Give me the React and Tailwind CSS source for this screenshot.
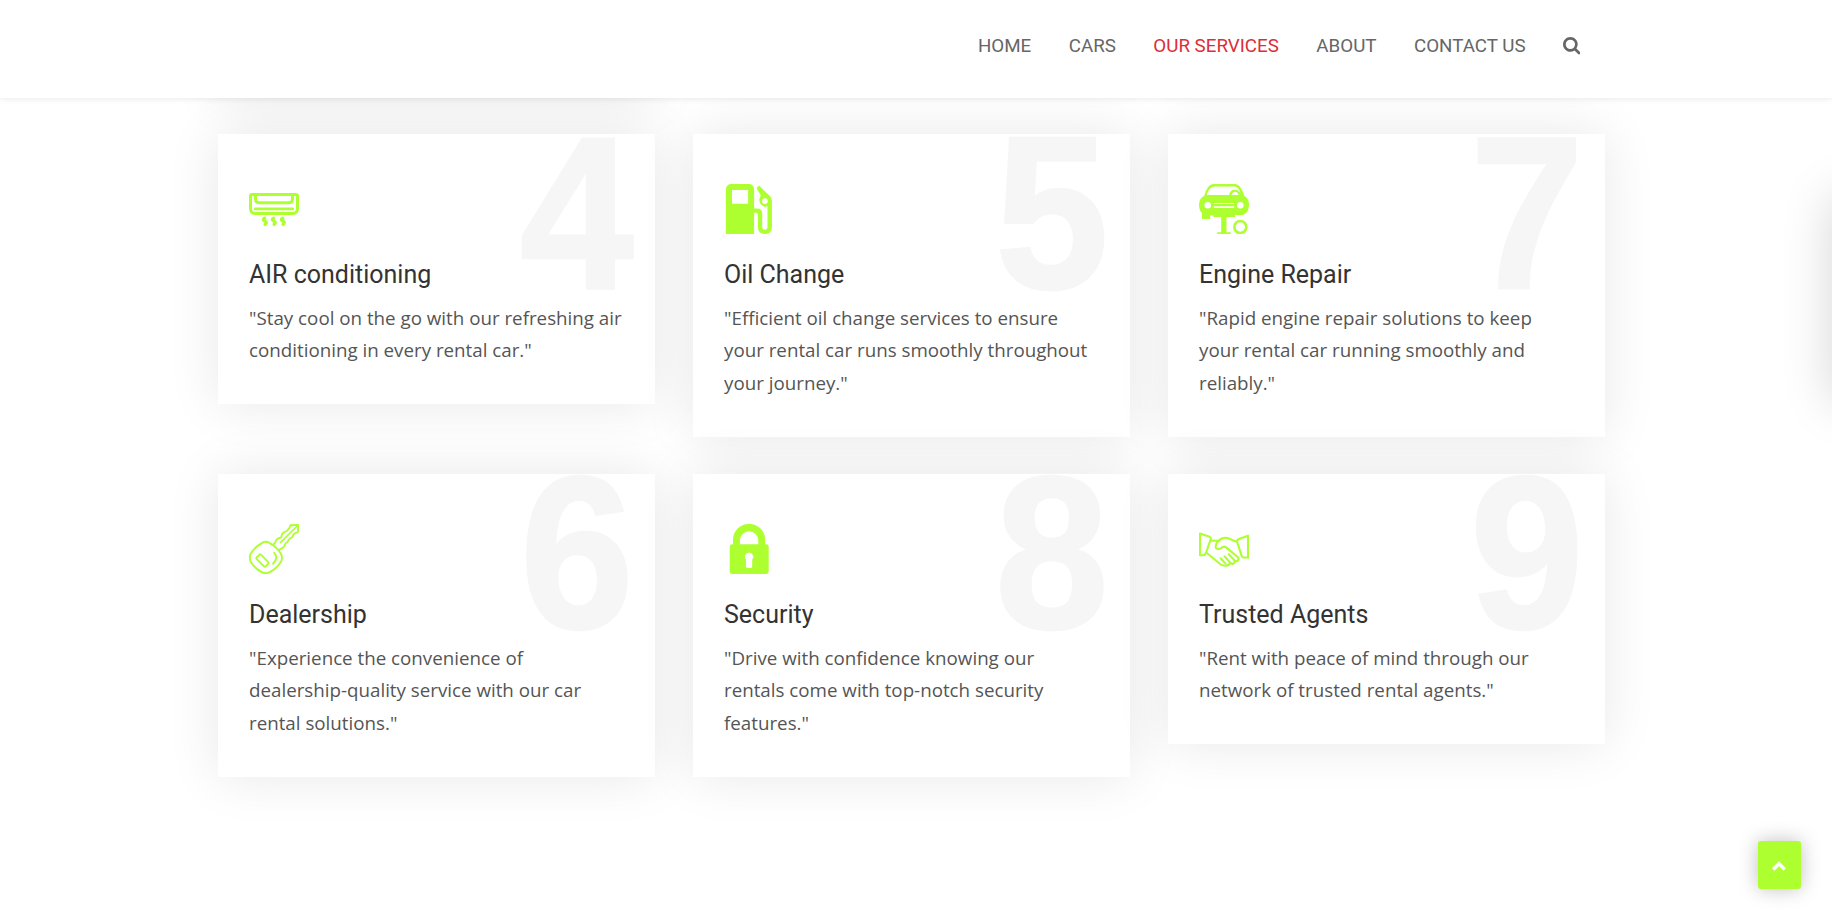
const AirIcon = () => (
  <svg viewBox="0 0 50 50" className="size-[50px]" fill="none" stroke="#adff2f" strokeWidth="3" strokeLinecap="round" strokeLinejoin="round">
    <path d="M3.2 10.5H46.8Q48.5 10.5 48.5 12V24.5Q48.5 29.5 43.8 29.5H6.2Q1.5 29.5 1.5 24.5V12Q1.5 10.5 3.2 10.5Z" />
    <path d="M6.500 11V15Q6.500 18.700 10 18.700H40Q43.500 18.700 43.500 15V11" />
    <path d="M6.2 24.900H43.8" strokeWidth="2.600" />
    <path d="M15.6 34.200Q13.2 35.6 15.6 37Q18.6 38.6 16.2 40.400M24.6 34.200Q22.2 35.6 24.6 37Q27.6 38.6 25.2 40.400M33.6 34.200Q31.2 35.6 33.6 37Q36.6 38.6 34.2 40.400" strokeWidth="3.400" />
  </svg>
);

const GasIcon = () => (
  <svg viewBox="-0.7 0 50 50" className="size-[50px]" fill="#adff2f">
    <path fillRule="evenodd" d="M7 0H23.6Q29.4 0 29.4 5.8V24.6H32.4Q37.5 24.6 37.5 29.7V43Q37.5 45.8 40.1 45.8T42.8 43V21.9Q41.5 22.7 40 22.7A6.9 6.9 0 0 1 36.2 11.6L31.8 4.3L34.4 1.6L45.2 12Q47.2 14 47.2 17V43Q47.2 50 40.3 50T33.2 43V30.4Q33.2 28.8 31.6 28.8H29.4V50H1.2V5.8Q1.2 0 7 0ZM7.3 6.1V19.8H23.4V6.1ZM40.2 14.2A2.9 2.9 0 1 0 40.2 20A2.9 2.9 0 1 0 40.2 14.2Z" />
  </svg>
);

const CarIcon = () => (
  <svg viewBox="0 0 50 50" className="size-[50px]" fill="#adff2f">
    <path fillRule="evenodd" d="M15 0H35.5Q39 0 41.3 3.2Q43.8 6.5 45.3 11.7Q50.2 15 50 21Q49.8 29 43.5 31H36V33H14.4V31.5H11.2V35H3V29.2Q0 26 0 21Q-.2 14.5 5.2 11.7Q6.3 7 9 3.2Q11.4 0 15 0ZM15.5 2.6Q12.4 2.6 10.5 5.3Q8.6 8 7.6 11.1H30.2C30.5 7.8 32.8 5.8 36 5.8C39 5.8 40.9 7.5 41.9 10.3Q41.2 7.4 39.3 4.8Q37.8 2.6 35.4 2.6ZM36 7.8Q33.2 8 32.6 11.1H39.7Q38.8 8 36 7.8ZM8.7 17.9A3.3 3.3 0 1 0 8.7 24.5A3.3 3.3 0 1 0 8.7 17.9ZM41.3 17.9A3.3 3.3 0 1 0 41.3 24.5A3.3 3.3 0 1 0 41.3 17.9ZM14.8 18.9V20.1H35.2V18.9ZM14.8 22.2V24H35.2V22.2Z" />
    <path d="M22.2 32.5H27.5V48.2H31.8V50H18.2V48.2H22.2Z" />
    <circle cx="41.3" cy="43" r="6" fill="none" stroke="#adff2f" strokeWidth="2.6" />
  </svg>
);

const KeyIcon = () => (
  <svg viewBox="0 0 50 50" className="size-[50px]" fill="none" stroke="#adff2f" strokeWidth="1.9" strokeLinecap="round" strokeLinejoin="round">
    <path d="M13.2 18.8Q16.8 16.8 20.3 18.8Q28.5 23.2 32.2 30.3Q33.8 33.8 32.2 37.2Q28.2 44.5 20.3 48.3Q16.8 50 13.2 48.3Q5.3 44.5 1.5 37.2Q.3 33.800 1.5 30.3Q5.3 23.2 13.2 18.8Z" />
    <path d="M10.6 30.6L7.7 33.5Q6.9 34.3 7.7 35.1L15 42.4Q15.8 43.2 16.6 42.4L19.3 39.7Q20.1 38.9 19.3 38.1L12 30.6Q11.3 29.9 10.6 30.6Z" />
    <path d="M25.2 28.8Q30 34 24 39.7M24 20.8L26.400 18.400C27 14.800 28.600 14.8 32.200 13.400C32.800 9 34.200 8.200 38.200 6.800C39.400 4.600 38.800 5.600 40.400 4L41.400 1.300L49.1.9L49 8L45.400 9.600C43.400 10.200 44.600 12.400 43 13.400C39.600 14.300 39.400 16.600 38.200 18.400C35.200 19.400 36 22.5 34 23.600L30 26" />
    <path d="M47.600 2.500L31.400 18.600" strokeWidth="1.6" />
  </svg>
);

const LockIcon = () => (
  <svg viewBox="-0.5 0 50 50" className="size-[50px]" fill="#adff2f">
    <path fillRule="evenodd" d="M8.5 20.3V16A16.1 16.1 0 0 1 40.7 16V20.3H41.8Q44.2 20.3 44.2 22.7V47.6Q44.2 50 41.8 50H7.6Q5.2 50 5.2 47.6V22.7Q5.2 20.3 7.6 20.3ZM15.4 20.3H33.8V16.5A9.2 9.2 0 0 0 15.4 16.5ZM24.6 28.5A4.2 4.2 0 0 0 21.5 35.5V42.5Q21.5 43.9 22.9 43.9H26.3Q27.7 43.9 27.7 42.5V35.5A4.2 4.2 0 0 0 24.6 28.5Z" />
  </svg>
);

const HandshakeIcon = () => (
  <svg viewBox="0 0 50 50" className="size-[50px]" fill="none" stroke="#adff2f" strokeWidth="2.1" strokeLinecap="round" strokeLinejoin="round">
    <path d="M1 9.6L9.8 12.4Q12.4 13.3 11.7 15.4L6.9 29Q6 31.2 3.6 31.2H1Z" />
    <path d="M49 11.7V33.5H45.5Q43 33.5 42.4 31.2L38.1 18Q37.6 16 39.9 15Z" />
    <path d="M11.8 16.7H20.5M38 17.5C34 18 32 13.8 26.5 13.7C21 13.7 16.8 18.8 16.6 22.4C16.5 25.6 20.2 25.6 22.5 23.8Q25 21.4 27.4 23.6L38.4 32.8C41.2 35.2 38.2 38.6 35.5 36.4C36.5 39.4 33.5 41 31.2 39C30 42 25 42.4 22 40.7L7.6 28.8" />
    <path d="M29.8 30.2L35.5 36.4M25.6 32.3L31.3 38.8M21.7 34.3L26.5 39.6" />
  </svg>
);

const services = [
  { n: "4", title: "AIR conditioning", Icon: AirIcon, lines: ['"Stay cool on the go with our refreshing air', 'conditioning in every rental car."'] },
  { n: "5", title: "Oil Change", Icon: GasIcon, lines: ['"Efficient oil change services to ensure', "your rental car runs smoothly throughout", 'your journey."'] },
  { n: "7", title: "Engine Repair", Icon: CarIcon, lines: ['"Rapid engine repair solutions to keep', "your rental car running smoothly and", 'reliably."'] },
  { n: "6", title: "Dealership", Icon: KeyIcon, lines: ['"Experience the convenience of', "dealership-quality service with our car", 'rental solutions."'] },
  { n: "8", title: "Security", Icon: LockIcon, lines: ['"Drive with confidence knowing our', "rentals come with top-notch security", 'features."'] },
  { n: "9", title: "Trusted Agents", Icon: HandshakeIcon, lines: ['"Rent with peace of mind through our', 'network of trusted rental agents."'] },
];

function ServiceCard({ n, title, Icon, lines }) {
  return (
    <article className="relative bg-white px-[31px] pt-[50px] pb-[37.8px] shadow-[0_0_50px_rgba(0,0,0,0.095)]">
      <span className="absolute top-[-40px] right-[18px] origin-[25px_193.5px] scale-x-[0.96] scale-y-[1.022] font-['Liberation_Sans',Arial,sans-serif] text-[213px] leading-[240px] font-bold text-[#f6f6f6] [-webkit-text-stroke:2.5px_#f6f6f6]">{n}</span>
      <div className="relative">
        <Icon />
        <h3 className="mt-[24px] font-[Roboto,sans-serif] text-[25px] leading-[34px] whitespace-nowrap text-[#333333]">{title}</h3>
        <p className="mt-[9.6px] font-['Open_Sans',sans-serif] text-[18.75px] leading-[32.5px] whitespace-nowrap text-[#555555]">
          {lines.map((line) => (
            <span key={line} className="block">{line}</span>
          ))}
        </p>
      </div>
    </article>
  );
}

const navItems = ["HOME", "CARS", "OUR SERVICES", "ABOUT", "CONTACT US"];

export default function App() {
  return (
    <div className="relative flex h-[915px] w-[1832px] flex-col overflow-hidden bg-white">
      <header className="relative z-10 flex h-[98px] shrink-0 items-start justify-end bg-white pt-[31px] pr-[251.600px] shadow-[0_0_7px_rgba(0,0,0,0.11)]">
        <nav className="flex items-center gap-[37.5px] font-[Roboto,sans-serif] text-[18.75px] leading-[30px] text-[#666666]">
          {navItems.map((item) => (
            <a key={item} className={item === "OUR SERVICES" ? "text-[#dc2e38]" : ""}>{item}</a>
          ))}
          <svg viewBox="0 0 1664 1664" className="w-[17.4px]" fill="#666666" role="img" aria-label="Search">
            <path d="M1152 704q0-185-131.500-316.500T704 256 387.500 387.500 256 704t131.500 316.500T704 1152t316.500-131.500T1152 704zm512 832q0 52-38 90t-90 38q-54 0-90-38l-343-342q-179 124-399 124-143 0-273.500-55.500t-225-150-150-225T0 704t55.500-273.500 150-225 225-150T704 0t273.500 55.500 225 150 150 225T1408 704q0 220-124 399l343 343q37 37 37 90z" />
          </svg>
        </nav>
      </header>

      <main className="flex flex-col pl-[218px]">
        <div className="-mt-[301px] grid grid-cols-[437px_437px_437px] items-start gap-x-[38px]">
          <div className="h-[300px] bg-white shadow-[0_0_50px_rgba(0,0,0,0.095)]" />
          <div className="h-[267px] bg-white shadow-[0_0_50px_rgba(0,0,0,0.095)]" />
          <div className="h-[267px] bg-white shadow-[0_0_50px_rgba(0,0,0,0.095)]" />
        </div>
        <div className="mt-[37px] grid grid-cols-[437px_437px_437px] items-start gap-x-[38px] gap-y-[37.1px]">
          {services.map((s) => (
            <ServiceCard key={s.n} {...s} />
          ))}
        </div>
      </main>

      <div className="absolute top-[196px] left-[1832px] h-[206px] w-[60px] shadow-[0_0_50px_rgba(0,0,0,0.17)]" />

      <button className="absolute top-[841px] left-[1758px] flex h-[48px] w-[43px] items-center justify-center rounded-[3px] bg-[#adff2f] pr-px shadow-[0_0_19px_rgba(0,0,0,0.25)]" aria-label="Back to top">
        <svg viewBox="0 0 14 10" className="mt-[2px] w-[14px]" fill="none" stroke="#ffffff" strokeWidth="3.4">
          <path d="M1.200 8.500L7 2.700L12.800 8.500" />
        </svg>
      </button>
    </div>
  );
}
